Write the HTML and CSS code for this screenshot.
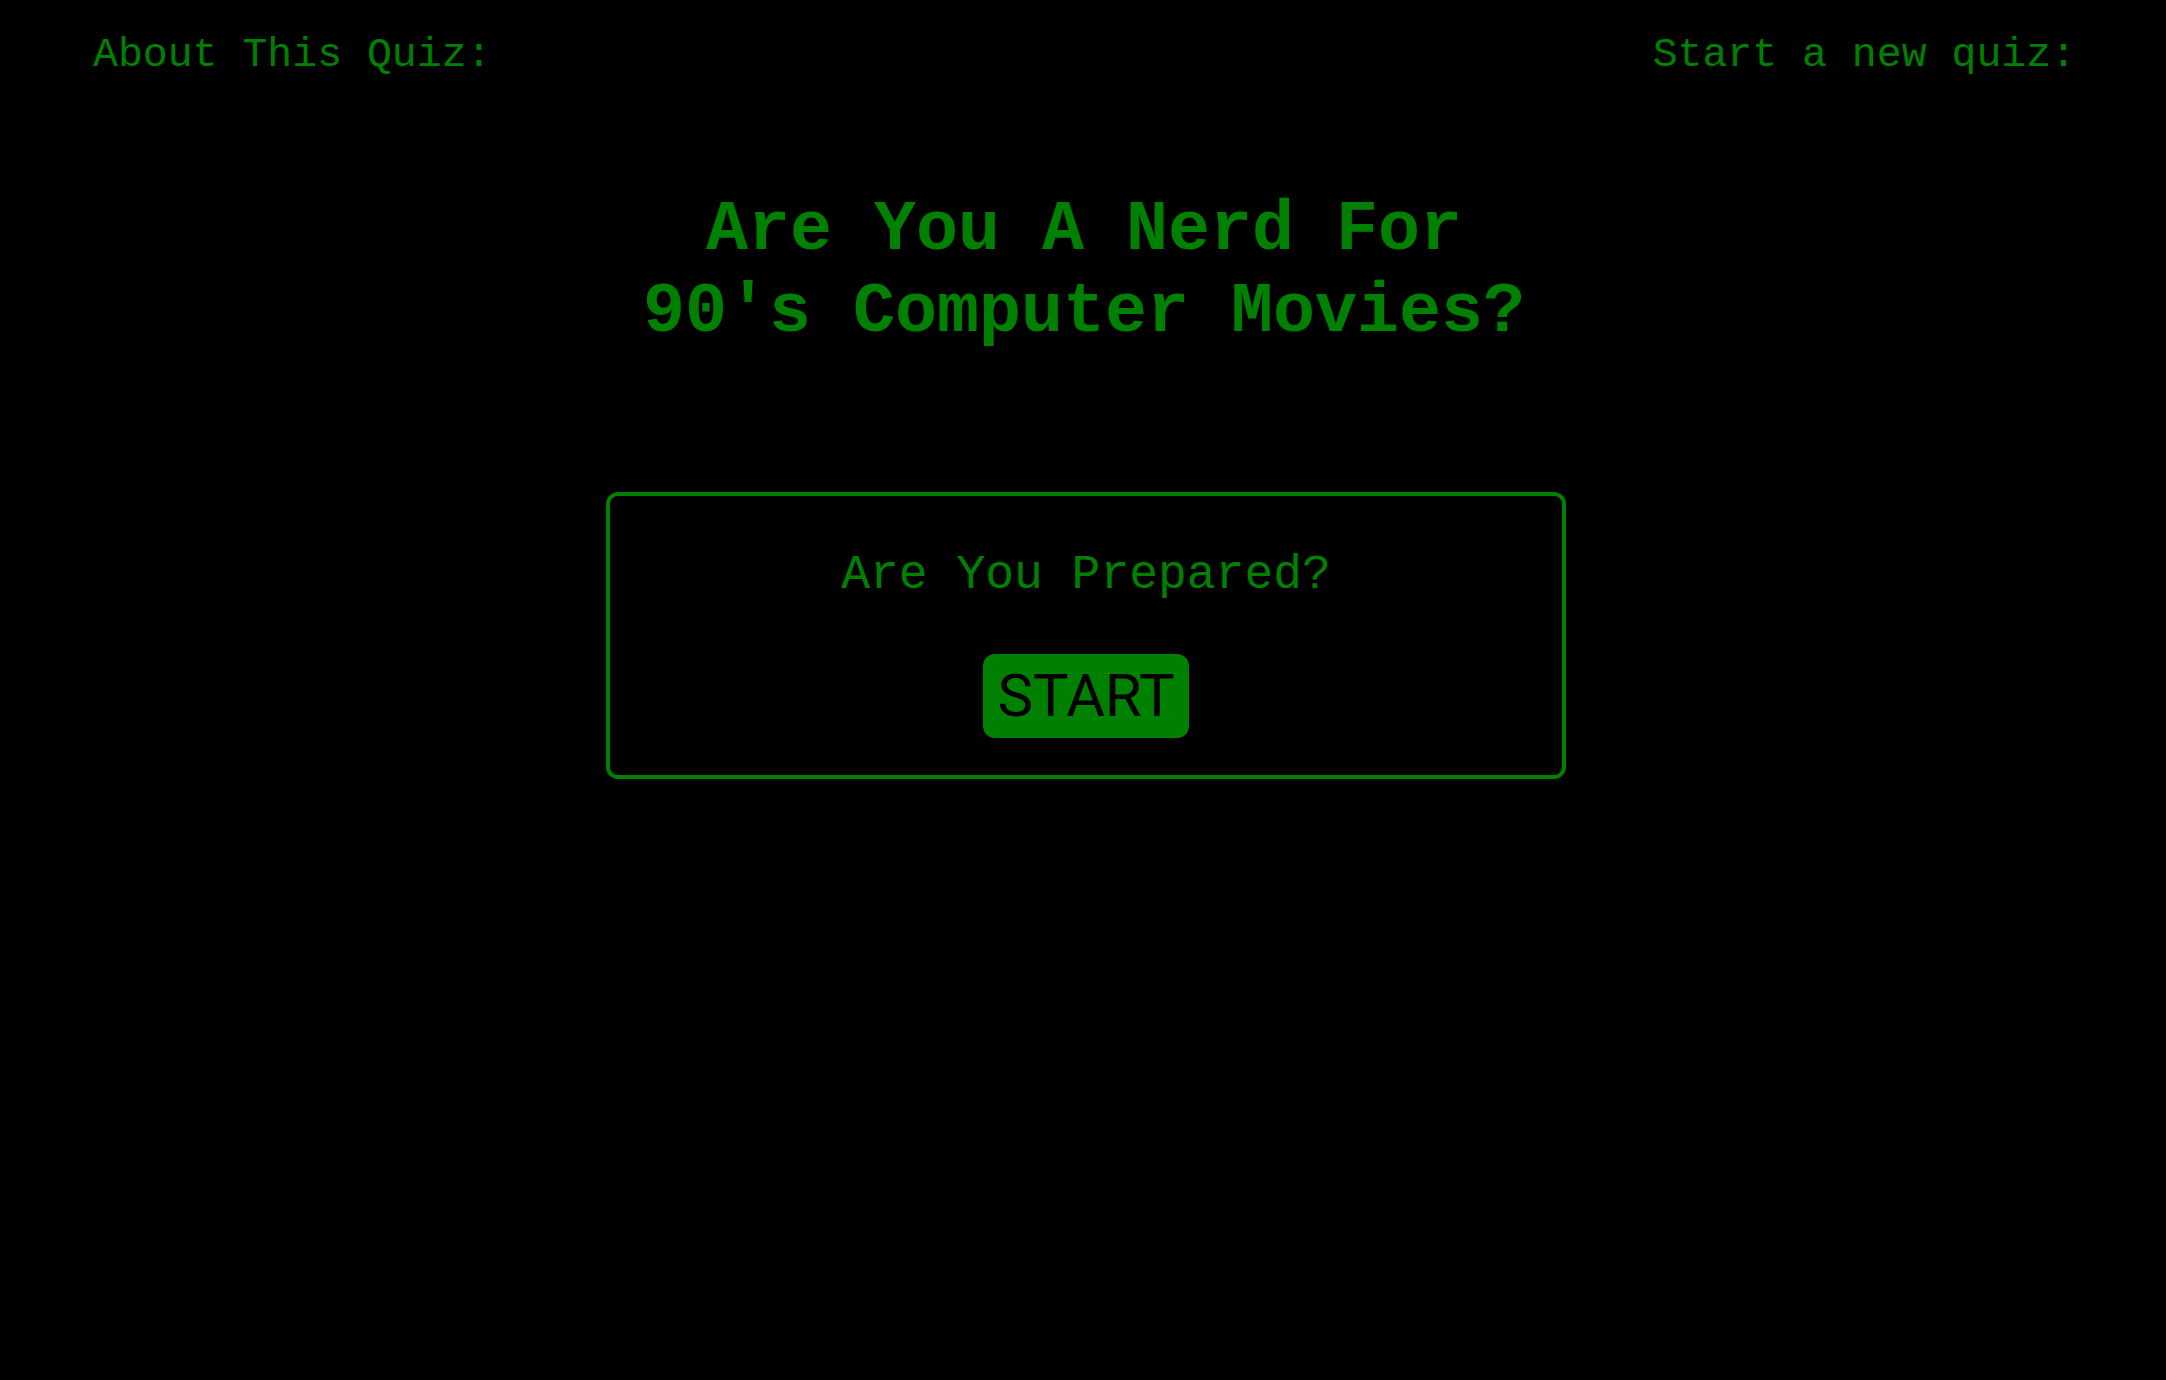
FILE: index.html
```html
<!DOCTYPE html>
<html lang="en">
<head>
<meta charset="utf-8">
<title>Are You A Nerd For 90's Computer Movies?</title>
<link rel="stylesheet" href="styles.css">
</head>
<body>
<header class="topbar">
  <span class="topbar-link">About This Quiz:</span>
  <span class="topbar-link">Start a new quiz:</span>
</header>
<main class="page">
  <h1 class="title">Are You A Nerd For<br>90's Computer Movies?</h1>
  <section class="quiz-card">
    <p class="quiz-prompt">Are You Prepared?</p>
    <button class="start-btn" type="button">START</button>
  </section>
</main>
</body>
</html>
```

FILE: styles.css
```css
html, body {
  margin: 0;
  padding: 0;
  background: #000;
}

body {
  font-family: "Liberation Mono", "Courier New", monospace;
  color: #008000;
  min-height: 1380px;
}

.topbar {
  display: flex;
  justify-content: space-between;
  padding: 31px 90px 0 93px;
  font-size: 41.5px;
  line-height: 47px;
}

.page {
  display: flex;
  flex-direction: column;
  align-items: center;
}

.title {
  margin: 112px 0 0 2px;
  font-size: 70px;
  font-weight: bold;
  line-height: 82px;
  text-align: center;
}

.quiz-card {
  box-sizing: border-box;
  width: 960px;
  margin: 138px 0 0 6px;
  padding: 52px 0 37px;
  border: 4px solid #008000;
  border-radius: 12px;
  display: flex;
  flex-direction: column;
  align-items: center;
}

.quiz-prompt {
  margin: 0 0 52px;
  font-size: 48px;
  line-height: 54px;
}

.start-btn {
  height: 84px;
  padding: 0 14px;
  border: none;
  border-radius: 12px;
  background: #008000;
  color: #000;
  font-family: Roboto, "Liberation Sans", sans-serif;
  font-size: 60px;
  line-height: 84px;
  letter-spacing: -0.3px;
}
```
